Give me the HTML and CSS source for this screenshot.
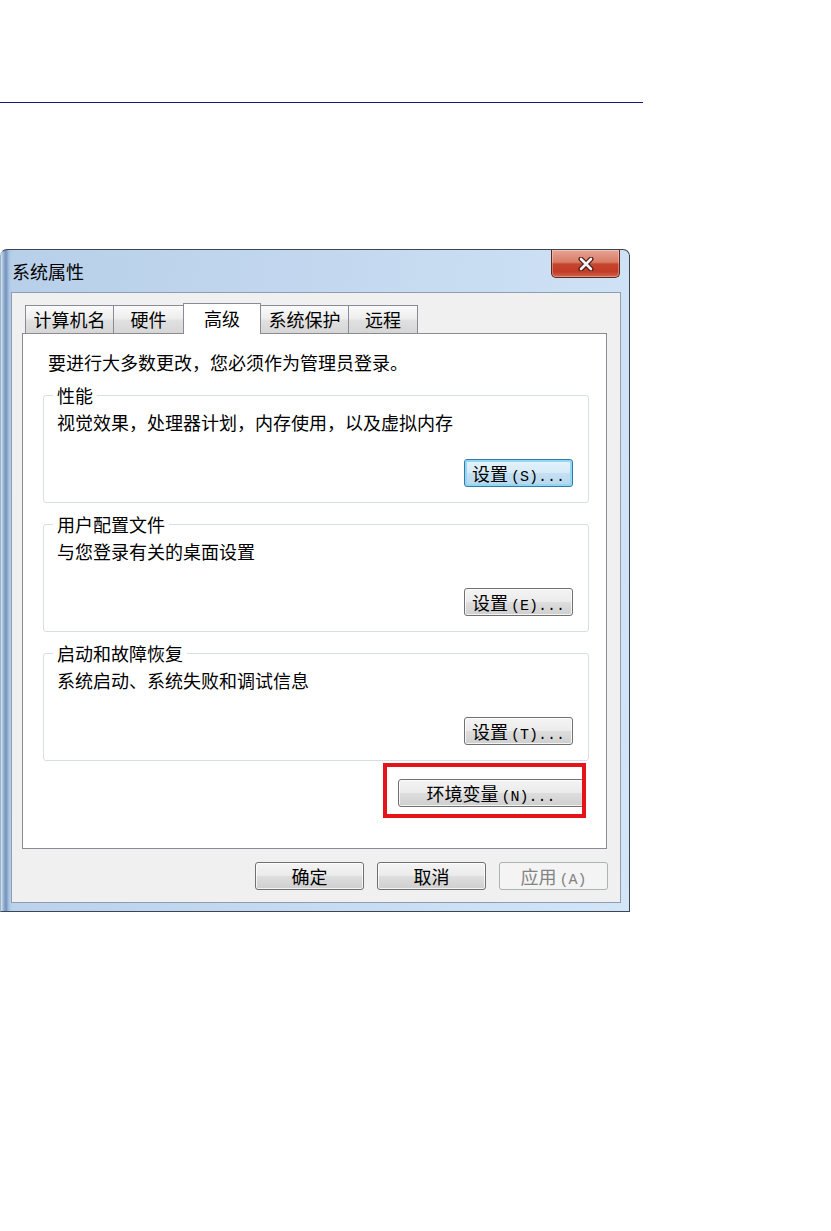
FILE: index.html
```html
<!DOCTYPE html>
<html lang="zh-CN">
    <head>
        <meta charset="utf-8">
        <title>系统属性</title>
        <link rel="stylesheet" href="styles.css">
    </head>
    <body>
        <hr class="top-rule">
        <div class="window">
            <div class="title-bar">
                <span class="title">系统属性</span>
                <button class="close-btn" aria-label="关闭">
                    <svg width="18" height="14" viewBox="0 0 18 14">
                        <path d="M4 2 L14 12 M14 2 L4 12" stroke="#4a1c16" stroke-width="5" stroke-linecap="round"/>
                        <path d="M4 2 L14 12 M14 2 L4 12" stroke="#f4f4f4" stroke-width="2.6" stroke-linecap="round"/>
                    </svg>
                </button>
            </div>
            <div class="client">
                <ul class="tabs">
                    <li class="tab tab-name">计算机名</li>
                    <li class="tab tab-hardware">硬件</li>
                    <li class="tab tab-advanced selected">高级</li>
                    <li class="tab tab-protect">系统保护</li>
                    <li class="tab tab-remote">远程</li>
                </ul>
                <div class="panel">
                    <p class="notice">要进行大多数更改，您必须作为管理员登录。</p>
                    <fieldset class="group">
                        <legend>性能</legend>
                        <p class="group-text">视觉效果，处理器计划，内存使用，以及虚拟内存</p>
                        <div class="group-actions">
                            <button class="btn btn-setting btn-default">设置<span class="key">(S)...</span></button>
                        </div>
                    </fieldset>
                    <fieldset class="group">
                        <legend>用户配置文件</legend>
                        <p class="group-text">与您登录有关的桌面设置</p>
                        <div class="group-actions">
                            <button class="btn btn-setting">设置<span class="key">(E)...</span></button>
                        </div>
                    </fieldset>
                    <fieldset class="group">
                        <legend>启动和故障恢复</legend>
                        <p class="group-text">系统启动、系统失败和调试信息</p>
                        <div class="group-actions">
                            <button class="btn btn-setting">设置<span class="key">(T)...</span></button>
                        </div>
                    </fieldset>
                    <div class="env-row">
                        <span class="callout">
                            <button class="btn btn-env">环境变量<span class="key">(N)...</span></button>
                        </span>
                    </div>
                </div>
                <div class="dialog-buttons">
                    <button class="btn btn-dialog">确定</button>
                    <button class="btn btn-dialog">取消</button>
                    <button class="btn btn-dialog" disabled>应用<span class="key">(A)</span></button>
                </div>
            </div>
        </div>
    </body>
</html>
```

FILE: styles.css
```css
* {
    box-sizing: border-box;
}

body {
    margin: 0;
    background-color: #ffffff;
    font-family: "Noto Sans CJK SC", "Liberation Sans", sans-serif;
    font-size: 18px;
    line-height: 20px;
    color: #000000;
}

.top-rule {
    width: 643px;
    height: 0;
    margin: 102px 0 0 0;
    border: none;
    border-top: 1px solid #17177f;
}

/* window frame */

.window {
    width: 630px;
    margin-top: 146px;
    padding: 0 8px 8px 10px;
    border: 1px solid #3a4655;
    border-left-color: #9fb4cc;
    border-radius: 7px 7px 0 0;
    background:
        linear-gradient(to right, #d6e5f5 0px, #8fabcd 3px, #7493b9 5px, #a9c4e4 8px, rgba(194, 216, 240, 0) 11px),
        linear-gradient(100deg, #b7cfe9 0%, #c3d8ef 45%, #d3e5f7 100%);
}

.title-bar {
    display: flex;
    justify-content: space-between;
    align-items: center;
    height: 42px;
    padding-left: 1px;
}

.close-btn {
    align-self: flex-start;
    display: flex;
    align-items: center;
    justify-content: center;
    width: 69px;
    height: 28px;
    margin-right: 1px;
    padding: 0;
    border: 1px solid #5d2620;
    border-top: none;
    border-radius: 0 0 5px 5px;
    background: linear-gradient(to bottom, #e6a493 0%, #d97c66 45%, #c5452f 52%, #c23c27 80%, #d0654b 100%);
    box-shadow: inset 0 0 0 1px rgba(255, 255, 255, 0.3);
}

.client {
    padding: 10px 0 12px 0;
    border: 1px solid #8e9db0;
    background-color: #f0f0f0;
}

/* tabs */

.tabs {
    display: flex;
    align-items: flex-end;
    height: 31px;
    margin: 0 0 -1px 13px;
    padding: 0;
    list-style: none;
}

.tab {
    height: 28px;
    margin-bottom: 1px;
    padding-top: 3px;
    border: 1px solid #898c95;
    border-bottom: none;
    background: linear-gradient(to bottom, #fbfbfb 0%, #eeeeee 45%, #e0e0e0 55%, #d6d6d6 100%);
    text-align: center;
}

.tab + .tab {
    margin-left: -1px;
}

.tab-name { width: 89px; }
.tab-hardware { width: 71px; }
.tab-advanced { width: 78px; }
.tab-protect { width: 89px; }
.tab-remote { width: 70px; }

.tab.selected {
    position: relative;
    z-index: 1;
    height: 31px;
    margin-bottom: 0;
    padding-top: 4px;
    background: #ffffff;
}

.panel {
    margin: 0 13px 0 10px;
    padding: 18px 17px 41px 20px;
    border: 1px solid #898c95;
    background-color: #ffffff;
}

.notice {
    margin: 0 0 13px 5px;
}

/* group boxes */

.group {
    min-width: 0;
    margin: 0 0 11px 0;
    padding: 7px 15px 15px 13px;
    border: 1px solid #d5dfe5;
    border-radius: 3px;
}

.group legend {
    margin-left: -4px;
    padding: 0 4px;
    line-height: 20px;
}

.group-text {
    margin: 0;
}

.group-actions {
    display: flex;
    justify-content: flex-end;
    margin-top: 27px;
}

/* buttons */

.btn {
    display: block;
    height: 28px;
    padding: 0;
    border: 1px solid #707070;
    border-radius: 3px;
    background: linear-gradient(to bottom, #f4f4f4 0%, #ebebeb 48%, #dddddd 52%, #cfcfcf 100%);
    box-shadow: inset 0 0 0 1px rgba(255, 255, 255, 0.75);
    font-family: inherit;
    font-size: 18px;
    line-height: 26px;
    text-align: center;
    color: #000000;
}

.key {
    margin-left: 3px;
    font-family: "Liberation Mono", monospace;
    font-size: 15px;
}

.btn-setting {
    width: 109px;
}

.btn-default {
    border-color: #3379ae;
    background: linear-gradient(to bottom, #e6f3fb 0%, #d6ebf8 48%, #c4e0f2 52%, #b6d7ee 100%);
    box-shadow: inset 0 0 0 2px #93d8f2;
}

.env-row {
    display: flex;
    justify-content: flex-end;
    margin-top: 18px;
}

.callout {
    position: relative;
    margin-right: 5px;
}

.callout::after {
    content: "";
    position: absolute;
    top: -16px;
    left: -15px;
    right: -2px;
    bottom: -11px;
    border: 4px solid #e5141b;
}

.btn-env {
    width: 186px;
}

.dialog-buttons {
    display: flex;
    justify-content: flex-end;
    gap: 13px;
    margin-top: 13px;
    padding-right: 12px;
}

.btn-dialog {
    width: 109px;
}

.btn:disabled {
    border-color: #adb2b5;
    background: #f4f4f4;
    box-shadow: none;
    color: #838383;
}
```
